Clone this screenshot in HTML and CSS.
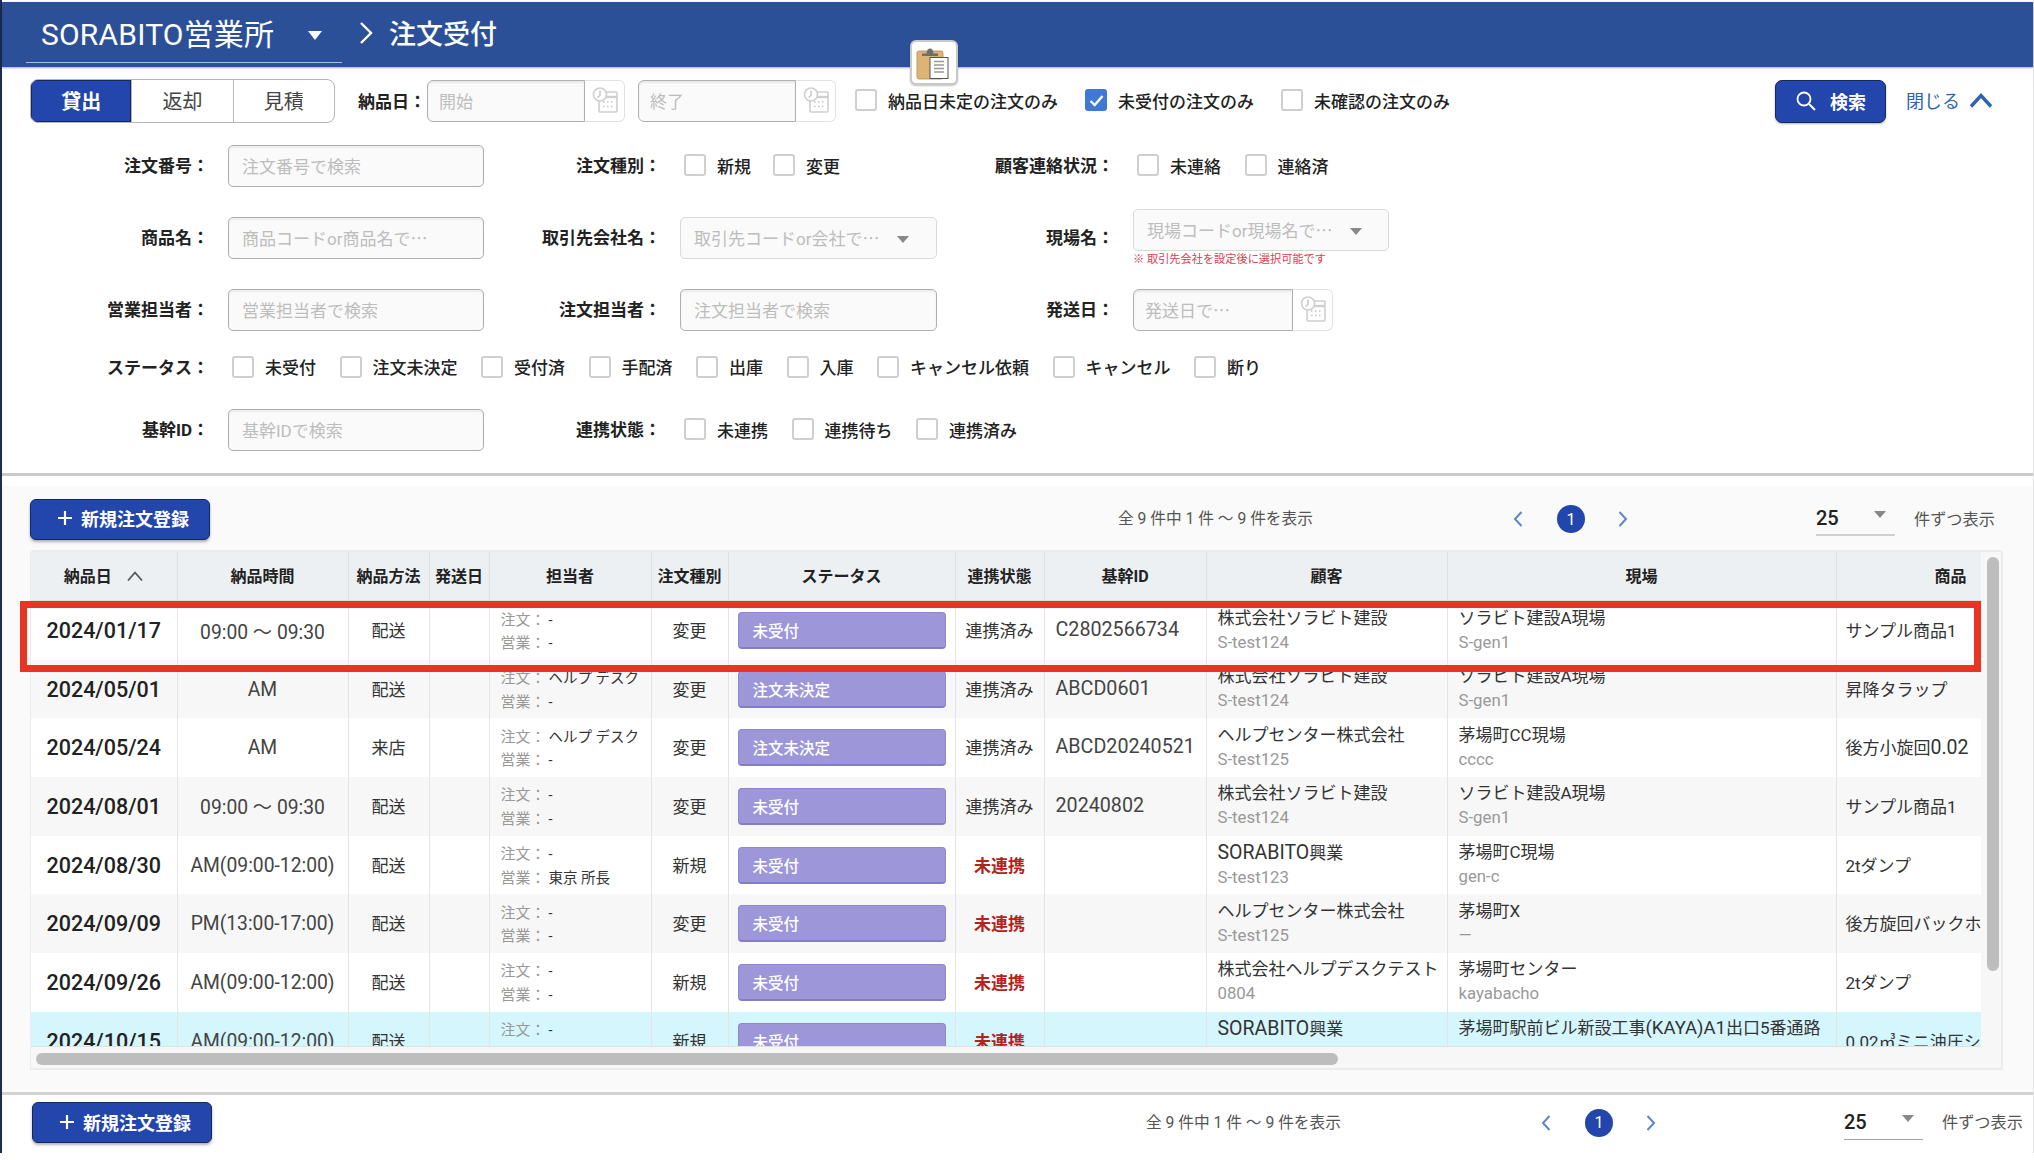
FILE: index.html
```html
<!DOCTYPE html>
<html lang="ja">
<head>
<meta charset="utf-8">
<title>注文受付</title>
<link rel="stylesheet" href="styles.css">
</head>
<body>
<div class="app">
  <header class="topbar">
    <div class="branch"><span class="branch-name">SORABITO営業所</span><span class="branch-arrow"></span></div>
    <svg class="crumb" width="16" height="26" viewBox="0 0 16 26"><path d="M3 3l10 10L3 23" fill="none" stroke="#fff" stroke-width="2.4"/></svg>
    <span class="page-title">注文受付</span>
  </header>

  <div class="clip-button">
    <svg width="36" height="34" viewBox="0 0 36 34">
      <rect x="1" y="5" width="26" height="28" rx="2" fill="#dcb473" stroke="#b09058" stroke-width=".8"/>
      <path d="M6 10V7.500h4.500Q11 2.500 14 2.500T17.500 7.500H22V10Z" fill="#6e6e72"/>
      <rect x="14" y="11.500" width="18" height="21" fill="#fff" stroke="#555" stroke-width="1"/>
      <path d="M18 15.500h10M18 19h10M18 22.500h10M18 26h10" stroke="#999" stroke-width="1.600"/>
    </svg>
  </div>

  <section class="filters">
    <div class="quick-row">
      <div class="tabs">
        <span class="tab tab-active">貸出</span><span class="tab">返却</span><span class="tab">見積</span>
      </div>
      <span class="quick-label">納品日：</span>
      <div class="date-field date-first"><span class="date-input">開始</span><span class="date-cal"><svg class="cal-icon" viewBox="0 0 26 26"><use href="#cal"/></svg></span></div>
      <div class="date-field date-second"><span class="date-input">終了</span><span class="date-cal"><svg class="cal-icon" viewBox="0 0 26 26"><use href="#cal"/></svg></span></div>
      <label class="check check-first"><i class="box"></i>納品日未定の注文のみ</label>
      <label class="check"><i class="box box-on"><svg width="21" height="21" viewBox="0 0 21 21"><path d="M4.500 11l4.200 4L16.500 6" fill="none" stroke="#fff" stroke-width="2.400"/></svg></i>未受付の注文のみ</label>
      <label class="check"><i class="box"></i>未確認の注文のみ</label>
      <span class="search-btn"><svg width="22" height="22" viewBox="0 0 22 22"><circle cx="9" cy="9" r="6.500" fill="none" stroke="#fff" stroke-width="1.800"/><path d="M14 14l6 6" stroke="#fff" stroke-width="2"/></svg>検索</span>
      <span class="close-link">閉じる<svg width="24" height="16" viewBox="0 0 24 16"><path d="M2 14.500L12 3.500l10 11" fill="none" stroke="#2f62b0" stroke-width="3.400"/></svg></span>
    </div>

    <div class="form-row form-row-first">
      <span class="f-label">注文番号：</span><span class="f-input">注文番号で検索</span>
      <span class="f-label">注文種別：</span>
      <div class="checks checks-tight"><label class="check"><i class="box"></i>新規</label><label class="check"><i class="box"></i>変更</label></div>
      <span class="f-label">顧客連絡状況：</span>
      <div class="checks"><label class="check"><i class="box"></i>未連絡</label><label class="check"><i class="box"></i>連絡済</label></div>
    </div>

    <div class="form-row">
      <span class="f-label">商品名：</span><span class="f-input">商品コードor商品名で<b class="ell">…</b></span>
      <span class="f-label">取引先会社名：</span>
      <span class="f-input f-select">取引先コードor会社で<b class="ell">…</b><i class="caret"></i></span>
      <span class="f-label">現場名：</span>
      <div class="site-cell">
        <span class="f-input f-select f-site">現場コードor現場名で<b class="ell">…</b><i class="caret"></i></span>
        <span class="site-note">※ 取引先会社を設定後に選択可能です</span>
      </div>
    </div>

    <div class="form-row">
      <span class="f-label">営業担当者：</span><span class="f-input">営業担当者で検索</span>
      <span class="f-label">注文担当者：</span><span class="f-input">注文担当者で検索</span>
      <span class="f-label">発送日：</span>
      <div class="date-field date-ship"><span class="date-input">発送日で<b class="ell">…</b></span><span class="date-cal"><svg class="cal-icon" viewBox="0 0 26 26"><use href="#cal"/></svg></span></div>
    </div>

    <div class="form-row status-row">
      <span class="f-label">ステータス：</span>
      <div class="checks checks-wide">
        <label class="check"><i class="box"></i>未受付</label>
        <label class="check"><i class="box"></i>注文未決定</label>
        <label class="check"><i class="box"></i>受付済</label>
        <label class="check"><i class="box"></i>手配済</label>
        <label class="check"><i class="box"></i>出庫</label>
        <label class="check"><i class="box"></i>入庫</label>
        <label class="check"><i class="box"></i>キャンセル依頼</label>
        <label class="check"><i class="box"></i>キャンセル</label>
        <label class="check"><i class="box"></i>断り</label>
      </div>
    </div>

    <div class="form-row id-row">
      <span class="f-label">基幹ID：</span><span class="f-input">基幹IDで検索</span>
      <span class="f-label">連携状態：</span>
      <div class="checks checks-span"><label class="check"><i class="box"></i>未連携</label><label class="check"><i class="box"></i>連携待ち</label><label class="check"><i class="box"></i>連携済み</label></div>
    </div>
  </section>

  <section class="results">
    <div class="toolbar">
      <span class="add-btn"><svg width="16" height="16" viewBox="0 0 16 16"><path d="M8 1v14M1 8h14" stroke="#fff" stroke-width="2.200"/></svg>新規注文登録</span>
      <div class="pager">
        <span class="count">全 9 件中 1 件 ～ 9 件を表示</span>
        <svg class="pg-arrow" width="10" height="18" viewBox="0 0 10 18"><path d="M8.500 2L2 9l6.500 7" fill="none" stroke="#5f85cf" stroke-width="2"/></svg>
        <span class="pg-num">1</span>
        <svg class="pg-arrow" width="10" height="18" viewBox="0 0 10 18"><path d="M1.500 2L8 9l-6.500 7" fill="none" stroke="#5f85cf" stroke-width="2"/></svg>
        <span class="per-page">25<i class="caret"></i></span>
        <span class="per-label">件ずつ表示</span>
      </div>
    </div>

    <div class="grid-frame">
      <div class="grid-top">
        <div class="grid-view">
          <table class="orders">
            <colgroup>
              <col class="c-date"><col class="c-time"><col class="c-how"><col class="c-ship"><col class="c-staff"><col class="c-kind"><col class="c-status"><col class="c-link"><col class="c-id"><col class="c-cust"><col class="c-site"><col class="c-prod">
            </colgroup>
            <thead>
              <tr>
                <th>納品日<svg class="sort" width="18" height="12" viewBox="0 0 18 12"><path d="M2 10.500L9 2.500l7 8" fill="none" stroke="#555" stroke-width="1.800"/></svg></th>
                <th>納品時間</th><th>納品方法</th><th>発送日</th><th>担当者</th><th>注文種別</th><th>ステータス</th><th>連携状態</th><th>基幹ID</th><th>顧客</th><th>現場</th><th>商品</th>
              </tr>
            </thead>
            <tbody>
              <tr>
                <td class="d-date">2024/01/17</td><td class="mid latin">09:00 ～ 09:30</td><td class="mid">配送</td><td></td>
                <td class="staff"><div><em>注文：</em>-</div><div><em>営業：</em>-</div></td>
                <td class="mid">変更</td><td class="st"><span class="badge">未受付</span></td><td class="mid">連携済み</td><td class="pad latin-id">C2802566734</td>
                <td class="pad two"><div>株式会社ソラビト建設</div><small>S-test124</small></td><td class="pad two"><div>ソラビト建設A現場</div><small>S-gen1</small></td><td class="prod">サンプル商品1</td>
              </tr>
              <tr>
                <td class="d-date">2024/05/01</td><td class="mid latin">AM</td><td class="mid">配送</td><td></td>
                <td class="staff"><div><em>注文：</em>ヘルプ デスク</div><div><em>営業：</em>-</div></td>
                <td class="mid">変更</td><td class="st"><span class="badge">注文未決定</span></td><td class="mid">連携済み</td><td class="pad latin-id">ABCD0601</td>
                <td class="pad two"><div>株式会社ソラビト建設</div><small>S-test124</small></td><td class="pad two"><div>ソラビト建設A現場</div><small>S-gen1</small></td><td class="prod">昇降タラップ</td>
              </tr>
              <tr>
                <td class="d-date">2024/05/24</td><td class="mid latin">AM</td><td class="mid">来店</td><td></td>
                <td class="staff"><div><em>注文：</em>ヘルプ デスク</div><div><em>営業：</em>-</div></td>
                <td class="mid">変更</td><td class="st"><span class="badge">注文未決定</span></td><td class="mid">連携済み</td><td class="pad latin-id">ABCD20240521</td>
                <td class="pad two"><div>ヘルプセンター株式会社</div><small>S-test125</small></td><td class="pad two"><div>茅場町CC現場</div><small>cccc</small></td><td class="prod">後方小旋回<span class="lat">0.02</span></td>
              </tr>
              <tr>
                <td class="d-date">2024/08/01</td><td class="mid latin">09:00 ～ 09:30</td><td class="mid">配送</td><td></td>
                <td class="staff"><div><em>注文：</em>-</div><div><em>営業：</em>-</div></td>
                <td class="mid">変更</td><td class="st"><span class="badge">未受付</span></td><td class="mid">連携済み</td><td class="pad latin-id">20240802</td>
                <td class="pad two"><div>株式会社ソラビト建設</div><small>S-test124</small></td><td class="pad two"><div>ソラビト建設A現場</div><small>S-gen1</small></td><td class="prod">サンプル商品1</td>
              </tr>
              <tr>
                <td class="d-date">2024/08/30</td><td class="mid latin">AM(09:00-12:00)</td><td class="mid">配送</td><td></td>
                <td class="staff"><div><em>注文：</em>-</div><div><em>営業：</em>東京 所長</div></td>
                <td class="mid">新規</td><td class="st"><span class="badge">未受付</span></td><td class="mid unlinked">未連携</td><td class="pad"></td>
                <td class="pad two"><div><span class="lat">SORABITO</span>興業</div><small>S-test123</small></td><td class="pad two"><div>茅場町C現場</div><small>gen-c</small></td><td class="prod">2tダンプ</td>
              </tr>
              <tr>
                <td class="d-date">2024/09/09</td><td class="mid latin">PM(13:00-17:00)</td><td class="mid">配送</td><td></td>
                <td class="staff"><div><em>注文：</em>-</div><div><em>営業：</em>-</div></td>
                <td class="mid">変更</td><td class="st"><span class="badge">未受付</span></td><td class="mid unlinked">未連携</td><td class="pad"></td>
                <td class="pad two"><div>ヘルプセンター株式会社</div><small>S-test125</small></td><td class="pad two"><div>茅場町X</div><small>—</small></td><td class="prod">後方旋回バックホー</td>
              </tr>
              <tr>
                <td class="d-date">2024/09/26</td><td class="mid latin">AM(09:00-12:00)</td><td class="mid">配送</td><td></td>
                <td class="staff"><div><em>注文：</em>-</div><div><em>営業：</em>-</div></td>
                <td class="mid">新規</td><td class="st"><span class="badge">未受付</span></td><td class="mid unlinked">未連携</td><td class="pad"></td>
                <td class="pad two"><div>株式会社ヘルプデスクテスト</div><small>0804</small></td><td class="pad two"><div>茅場町センター</div><small>kayabacho</small></td><td class="prod">2tダンプ</td>
              </tr>
              <tr class="row-today">
                <td class="d-date">2024/10/15</td><td class="mid latin">AM(09:00-12:00)</td><td class="mid">配送</td><td></td>
                <td class="staff"><div><em>注文：</em>-</div><div><em>営業：</em>-</div></td>
                <td class="mid">新規</td><td class="st"><span class="badge">未受付</span></td><td class="mid unlinked">未連携</td><td class="pad"></td>
                <td class="pad two"><div><span class="lat">SORABITO</span>興業</div><small>S-test123</small></td><td class="pad two"><div>茅場町駅前ビル新設工事<span class="lat-mid">(KAYA)A1</span>出口5番通路</div><small>kaya</small></td><td class="prod">0.02㎥ミニ油圧ショベル</td>
              </tr>
            </tbody>
          </table>
        </div>
        <div class="vbar"><div class="vthumb"></div></div>
      </div>
      <div class="hbar"><div class="hthumb"></div></div>
      <div class="row-mark"></div>
    </div>
  </section>

  <footer class="footbar">
    <span class="add-btn"><svg width="16" height="16" viewBox="0 0 16 16"><path d="M8 1v14M1 8h14" stroke="#fff" stroke-width="2.200"/></svg>新規注文登録</span>
    <div class="pager">
      <span class="count">全 9 件中 1 件 ～ 9 件を表示</span>
      <svg class="pg-arrow" width="10" height="18" viewBox="0 0 10 18"><path d="M8.500 2L2 9l6.500 7" fill="none" stroke="#5f85cf" stroke-width="2"/></svg>
      <span class="pg-num">1</span>
      <svg class="pg-arrow" width="10" height="18" viewBox="0 0 10 18"><path d="M1.500 2L8 9l-6.500 7" fill="none" stroke="#5f85cf" stroke-width="2"/></svg>
      <span class="per-page per-page-dark">25<i class="caret"></i></span>
      <span class="per-label">件ずつ表示</span>
    </div>
  </footer>
</div>

<svg class="defs" width="0" height="0">
  <symbol id="cal" viewBox="0 0 26 26">
    <rect x="7" y="5" width="18" height="20" rx="1" fill="#fff" stroke="#cfcfcf" stroke-width="1.600"/>
    <path d="M7 10h18" stroke="#cfcfcf" stroke-width="2.400"/>
    <path d="M11 15h1.500M15 15h1.500M19 15h1.500M11 19.500h1.500M15 19.500h1.500M19 19.500h1.500" stroke="#c4c4c4" stroke-width="1.600"/>
    <circle cx="8" cy="7.500" r="6.500" fill="#fff" stroke="#cfcfcf" stroke-width="1.600"/>
    <path d="M8 3.500v5l-2.500 2" fill="none" stroke="#c4c4c4" stroke-width="1.400"/>
  </symbol>
</svg>
</body>
</html>
```

FILE: styles.css
```css
* { box-sizing: border-box; }
html, body { margin: 0; padding: 0; background: #fff; }
body {
  width: 2034px;
  height: 1160px;
  overflow: hidden;
  font-family: Roboto, "Noto Sans CJK JP", sans-serif;
  color: #222;
  font-size: 17px;
}
.defs { display: block; height: 0; }
.app {
  position: relative;
  width: 2034px;
  height: 1153px;
  border-left: 2px solid #1c2c55;
  border-right: 1px solid #e4e4e4;
  padding-top: 2px;
}

/* top bar */
.topbar {
  height: 65px;
  background: #2b5097;
  box-shadow: 0 1px 2px rgba(0,0,0,.35);
  display: flex;
  align-items: center;
  color: #fff;
  padding-left: 24px;
}
.branch {
  width: 316px;
  height: 54px;
  margin-top: 2px;
  display: flex;
  align-items: center;
  padding-left: 15px;
  border-bottom: 1px solid #a9bde2;
}
.branch-name { font-size: 30px; letter-spacing: .2px; width: 267px; padding-bottom: 6px; }
.branch-arrow {
  width: 0; height: 0;
  border-left: 7.500px solid transparent;
  border-right: 7.500px solid transparent;
  border-top: 9px solid #fff;
}
.crumb { margin-left: 16px; margin-bottom: 3px; }
.page-title { font-size: 27px; margin-left: 15px; padding-bottom: 5px; font-weight: 500; }

.clip-button {
  position: absolute;
  left: 908px;
  top: 40px;
  width: 48px;
  height: 45px;
  background: #fff;
  border: 2px solid #c9c9c9;
  border-radius: 6px;
  box-shadow: 0 1px 2px rgba(0,0,0,.25);
  display: flex;
  align-items: center;
  justify-content: center;
}

/* filters */
.filters { height: 406px; padding-top: 12px; }
.quick-row {
  height: 44px;
  display: flex;
  align-items: center;
  padding-left: 28px;
  padding-right: 40px;
}
.tabs {
  display: flex;
  width: 305px;
  height: 44px;
  border: 1px solid #b5b5b5;
  border-radius: 8px;
  overflow: hidden;
  background: #fff;
}
.tab {
  flex: 1;
  display: flex;
  align-items: center;
  justify-content: center;
  font-size: 20px;
  color: #444;
  border-left: 1px solid #b5b5b5;
  padding-bottom: 2px;
}
.tab:first-child { border-left: 0; }
.tab-active { background: #2246ac; color: #fff; font-weight: 700; box-shadow: 0 0 0 1px #15285c inset; }
.quick-label { margin-left: 23px; width: 69px; font-weight: 700; white-space: nowrap; padding-bottom: 2px; }
.date-field { display: flex; height: 42px; }
.date-first { width: 198px; }
.date-second { width: 198px; margin-left: 13px; }
.date-ship { width: 200px; }
.date-input {
  flex: 1;
  display: flex;
  align-items: center;
  padding-left: 11px;
  padding-bottom: 2px;
  background: #fafafa;
  color: #bdbdbd;
  font-size: 17px;
  border: 1px solid #b0b0b0;
  border-radius: 6px 0 0 6px;
  box-shadow: inset 0 2px 2px rgba(0,0,0,.07);
}
.date-cal {
  width: 40px;
  display: flex;
  align-items: center;
  justify-content: center;
  border: 1px solid #e2e2e2;
  border-left: 0;
  border-radius: 0 6px 6px 0;
  background: #fff;
}
.cal-icon { width: 26px; height: 26px; margin-top: -3px; }
.check { display: inline-flex; align-items: center; gap: 11px; font-weight: 500; white-space: nowrap; font-size: 17px; padding-bottom: 2px; }
.quick-row .check { margin-left: 27px; }
.quick-row .check-first { margin-left: 19px; }
.box {
  width: 22px;
  height: 22px;
  flex: none;
  display: block;
  background: #fff;
  border: 2px solid #cfcfcf;
  border-radius: 3px;
}
.box-on { background: #3f78d6; border: 0; padding: .5px; }
.box-on svg { display: block; }
.search-btn {
  margin-left: auto;
  width: 111px;
  height: 43px;
  display: flex;
  align-items: center;
  justify-content: center;
  gap: 13px;
  background: #2246ac;
  color: #fff;
  font-weight: 700;
  font-size: 18px;
  border: 1px solid #15285c;
  border-radius: 7px;
  box-shadow: 0 1px 2px rgba(0,0,0,.3);
}
.close-link { display: flex; align-items: center; gap: 9px; margin-left: 20px; color: #2f62b0; font-size: 18px; padding-bottom: 2px; }

.form-row {
  display: grid;
  grid-template-columns: 226px 256px 196px 257px 196px 1fr;
  height: 42px;
  align-items: center;
  margin-top: 30px;
}
.form-row-first { margin-top: 22px; }
.f-label { text-align: right; padding-right: 19px; padding-bottom: 3px; font-weight: 700; white-space: nowrap; font-size: 17px; }
.f-input {
  height: 42px;
  display: flex;
  align-items: center;
  padding-left: 13px;
  padding-bottom: 2px;
  background: #fafafa;
  color: #bdbdbd;
  font-size: 17px;
  border: 1px solid #b0b0b0;
  border-radius: 5px;
  box-shadow: inset 0 2px 2px rgba(0,0,0,.06);
  white-space: nowrap;
}
.ell { font-family: "Noto Sans CJK JP", sans-serif; font-weight: 400; }
.f-select { border-color: #d9d9d9; box-shadow: none; }
.caret {
  display: block;
  margin-left: 18px;
  width: 0; height: 0;
  border-left: 6px solid transparent;
  border-right: 6px solid transparent;
  border-top: 7px solid #888;
  margin-top: 5px;
}
.checks { display: flex; align-items: center; gap: 23.500px; padding-left: 4px; }
.checks-tight { gap: 22px; }
.checks-wide { grid-column: 2 / -1; padding-left: 4px; }
.checks-span { grid-column: 4 / -1; }
.site-cell { display: flex; flex-direction: column; align-self: start; margin-top: -8px; height: 42px; width: 256px; }
.f-site { flex: none; }
.site-note { font-size: 11.200px; line-height: 13px; color: #d9404e; margin-top: 2px; white-space: nowrap; }
.status-row { height: 22px; margin-top: 22.500px; }
.id-row { margin-top: 33.500px; }

/* results */
.results {
  height: 619px;
  background: #fafafa;
  border-top: 3px solid #c9c9c9;
  padding-top: 22px;
  background-image: linear-gradient(#fff 0 10px, transparent 10px);
}
.toolbar { height: 42px; display: flex; align-items: center; padding-left: 28px; padding-right: 40px; }
.add-btn {
  width: 180px;
  height: 41px;
  display: flex;
  align-items: center;
  justify-content: center;
  gap: 8px;
  background: #2246ac;
  color: #fff;
  font-weight: 700;
  font-size: 18px;
  padding: 0 0 2px 6px;
  border: 1px solid #15285c;
  border-radius: 6px;
  box-shadow: 0 2px 3px rgba(0,0,0,.3);
}
.pager { margin-left: auto; display: flex; align-items: center; }
.count { width: 196px; font-size: 15.700px; color: #555; white-space: nowrap; margin-right: 199px; padding-bottom: 3px; }
.pg-num {
  width: 28px; height: 28px;
  border-radius: 50%;
  background: #2246ac;
  color: #fff;
  font-size: 16px;
  display: flex;
  align-items: center;
  justify-content: center;
  margin: 0 33px 0 34px;
}
.per-page {
  width: 79px;
  height: 34px;
  margin-left: 188px;
  display: flex;
  align-items: center;
  font-size: 20px;
  font-weight: 500;
  border-bottom: 2px solid #cfcfcf;
  padding-bottom: 1px;
}
.per-page .caret { margin-left: 35px; margin-top: -6px; }
.per-page-dark { border-bottom-color: #a5a5a5; border-bottom-width: 1px; }
.per-label { width: 79px; margin-left: 19px; font-size: 16.200px; color: #555; white-space: nowrap; padding-bottom: 3px; }

.grid-frame {
  position: relative;
  margin-top: 10px;
  margin-left: 28px;
  width: 1973px;
  height: 520px;
  border: 2px solid #ececec;
  border-left-width: 1px;
  border-radius: 4px 4px 0 0;
  background: #f7f7f7;
}
.grid-top { display: flex; height: 495px; }
.grid-view { width: 1950px; height: 495px; overflow: hidden; border-bottom: 1px solid #e0e0e0; }
.orders { table-layout: fixed; border-collapse: collapse; width: 2034px; }
.c-date { width: 146px; } .c-time { width: 171px; } .c-how { width: 81px; } .c-ship { width: 60px; }
.c-staff { width: 162px; } .c-kind { width: 77px; } .c-status { width: 227px; } .c-link { width: 89px; }
.c-id { width: 162px; } .c-cust { width: 241px; } .c-site { width: 389px; } .c-prod { width: 229px; }
.orders th {
  height: 49px;
  background: #edf0f3;
  font-size: 16px;
  font-weight: 700;
  color: #222;
  border-right: 1px solid #dfe2e5;
  border-bottom: 2px solid #d9dbdd;
  padding: 0 0 3px;
  white-space: nowrap;
}
.sort { margin-left: 14px; }
.orders td {
  height: 58.700px;
  padding: 0 0 2px;
  background: #fff;
  border-right: 1px solid #e4e4e4;
  font-size: 17px;
  white-space: nowrap;
  overflow: hidden;
  color: #333;
}
.orders tbody tr:nth-child(even) td { background: #f7f7f7; }
.orders tbody tr.row-today td { background: #d6f6fe; }
.orders td.d-date { text-align: center; font-size: 21.500px; font-weight: 500; color: #222; padding-bottom: 0; }
.orders td.mid { text-align: center; }
.orders td.latin { font-size: 19.300px; color: #444; padding-bottom: 0; }
.orders td.pad { padding-left: 11px; }
.orders td.latin-id { font-size: 19.700px; color: #444; }
.orders td.prod { padding-left: 9px; }
.lat { font-size: 19.500px; }
.lat-mid { font-size: 18.500px; }
.orders td.staff { padding: 3px 0 0 11px; font-size: 14.500px; line-height: 22.500px; }
.staff em { font-style: normal; color: #999; display: inline-block; width: 48px; font-size: 15px; }
.orders td.st { padding: 0 9px; }
.badge {
  display: flex;
  align-items: center;
  height: 37px;
  padding-left: 14px;
  background: #9d97da;
  color: #fff;
  font-size: 15.500px;
  font-weight: 500;
  border: 1px solid #8d87cc;
  border-bottom: 2px solid #837dc4;
  border-radius: 4px;
}
.orders td.unlinked { color: #b3231c; font-weight: 700; }
.orders td.two { padding-bottom: 0; }
.two div { line-height: 23px; }
.two small { display: block; font-size: 16.800px; color: #999; line-height: 25px; }
.row-mark {
  position: absolute;
  left: -11px;
  top: 49px;
  width: 1961px;
  height: 71px;
  border: 7px solid #e93323;
  pointer-events: none;
}
.vbar { width: 20px; height: 495px; padding: 5px 0 0 6px; }
.vthumb { width: 12px; height: 414px; background: #bdbdbd; border-radius: 6px; }
.hbar { height: 21px; padding: 6px 0 0 5px; }
.hthumb { width: 1302px; height: 12px; background: #bdbdbd; border-radius: 6px; }

/* footer */
.footbar {
  height: 58px;
  display: flex;
  align-items: center;
  padding-left: 30px;
  padding-right: 12px;
  border-top: 3px solid #d2d2d2;
}
```
